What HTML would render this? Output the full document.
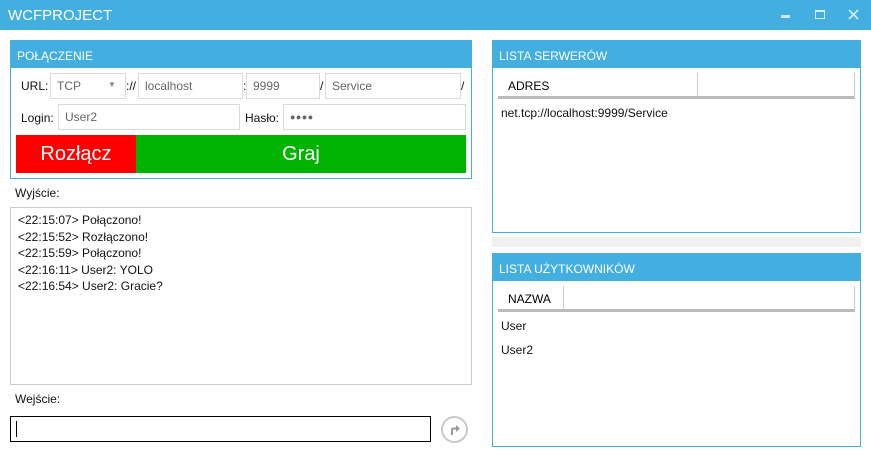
<!DOCTYPE html>
<html><head><meta charset="utf-8"><style>
*{margin:0;padding:0;box-sizing:border-box}
body{width:871px;height:457px;background:#fff;font-family:"Liberation Sans",sans-serif;font-size:12px;color:#111;position:relative;overflow:hidden}
.a{position:absolute}
.hdr{background:#42afe0;color:#fff;font-size:12px;padding:8px 0 0 6px;height:27px}
.box{position:absolute;border:1px solid #42afe0}
.in{position:absolute;border:1px solid #dadada;color:#666;font-size:12px;padding:5px 0 0 6px;height:26px}
.t{position:absolute;white-space:nowrap}
</style></head><body>
<div class="a" style="left:0;top:0;width:871px;height:30px;background:#42afe0"></div>
<div class="t" style="left:8px;top:7px;color:#fff;font-size:15px">WCFPROJECT</div>
<div class="a" style="left:781px;top:15px;width:9px;height:3px;background:#cfe9f6"></div>
<div class="a" style="left:815px;top:10px;width:10px;height:9px;border:1px solid #d6edf8;border-top-width:2px"></div>
<svg class="a" style="left:848px;top:9px" width="11" height="11"><path d="M1 1L10 10M10 1L1 10" stroke="#d6edf8" stroke-width="1.6"/></svg>

<div class="box" style="left:10px;top:40px;width:462px;height:139px">
<div class="hdr">POŁĄCZENIE</div></div>
<div class="t" style="left:21px;top:79px">URL:</div>
<div class="in" style="left:50px;top:73px;width:76px">TCP</div>
<div class="t" style="left:108px;top:80px;color:#888;font-size:8px">▼</div>
<div class="t" style="left:126px;top:79px">://</div>
<div class="in" style="left:138px;top:73px;width:105px">localhost</div>
<div class="t" style="left:243px;top:79px">:</div>
<div class="in" style="left:246px;top:73px;width:74px">9999</div>
<div class="t" style="left:320px;top:79px">/</div>
<div class="in" style="left:325px;top:73px;width:136px">Service</div>
<div class="t" style="left:461px;top:79px">/</div>
<div class="t" style="left:21px;top:111px">Login:</div>
<div class="in" style="left:58px;top:104px;width:182px">User2</div>
<div class="t" style="left:245px;top:111px">Hasło:</div>
<div class="in" style="left:283px;top:104px;width:183px;font-size:9px;padding-top:7px;letter-spacing:0.5px;color:#666">●●●●</div>
<div class="a" style="left:16px;top:135px;width:120px;height:38px;background:#fe0000;color:#fff;font-size:20px;text-align:center;line-height:38px">Rozłącz</div>
<div class="a" style="left:136px;top:135px;width:330px;height:38px;background:#00b300;color:#fff;font-size:20px;text-align:center;line-height:38px">Graj</div>

<div class="t" style="left:15px;top:186px">Wyjście:</div>
<div class="a" style="left:10px;top:207px;width:462px;height:178px;border:1px solid #ccc;padding:4px 0 0 7px;line-height:16.5px">&lt;22:15:07&gt; Połączono!<br>&lt;22:15:52&gt; Rozłączono!<br>&lt;22:15:59&gt; Połączono!<br>&lt;22:16:11&gt; User2: YOLO<br>&lt;22:16:54&gt; User2: Gracie?</div>
<div class="t" style="left:15px;top:392px">Wejście:</div>
<div class="a" style="left:10px;top:416px;width:421px;height:26px;border:1px solid #000"></div>
<div class="a" style="left:16px;top:421px;width:1px;height:16px;background:#000"></div>
<div class="a" style="left:441px;top:416px;width:27px;height:27px;border:2px solid #c8c8c8;border-radius:50%"></div>
<svg class="a" style="left:441px;top:416px" width="27" height="27"><path d="M11 19V14Q11 12.5 12.5 12.5H16" stroke="#999" stroke-width="2" fill="none"/><path d="M15 9l4 3.5-4 3.5z" fill="#999"/></svg>

<div class="box" style="left:492px;top:40px;width:369px;height:193px"><div class="hdr">LISTA SERWERÓW</div></div>
<div class="a" style="left:498px;top:73px;width:357px;height:26px;border-right:1px solid #ccc;border-bottom:3px solid #bbb"></div>
<div class="a" style="left:697px;top:73px;width:1px;height:23px;background:#ccc"></div>
<div class="t" style="left:508px;top:79px;color:#000">ADRES</div>
<div class="t" style="left:501px;top:106px">net.tcp://localhost:9999/Service</div>
<div class="a" style="left:492px;top:237px;width:369px;height:10px;background:#f0f0f0"></div>
<div class="box" style="left:492px;top:253px;width:369px;height:194px"><div class="hdr">LISTA UŻYTKOWNIKÓW</div></div>
<div class="a" style="left:498px;top:286px;width:357px;height:26px;border-right:1px solid #ccc;border-bottom:3px solid #bbb"></div>
<div class="a" style="left:563px;top:286px;width:1px;height:23px;background:#ccc"></div>
<div class="t" style="left:508px;top:292px;color:#000">NAZWA</div>
<div class="t" style="left:501px;top:319px">User</div>
<div class="t" style="left:501px;top:343px">User2</div>
</body></html>
